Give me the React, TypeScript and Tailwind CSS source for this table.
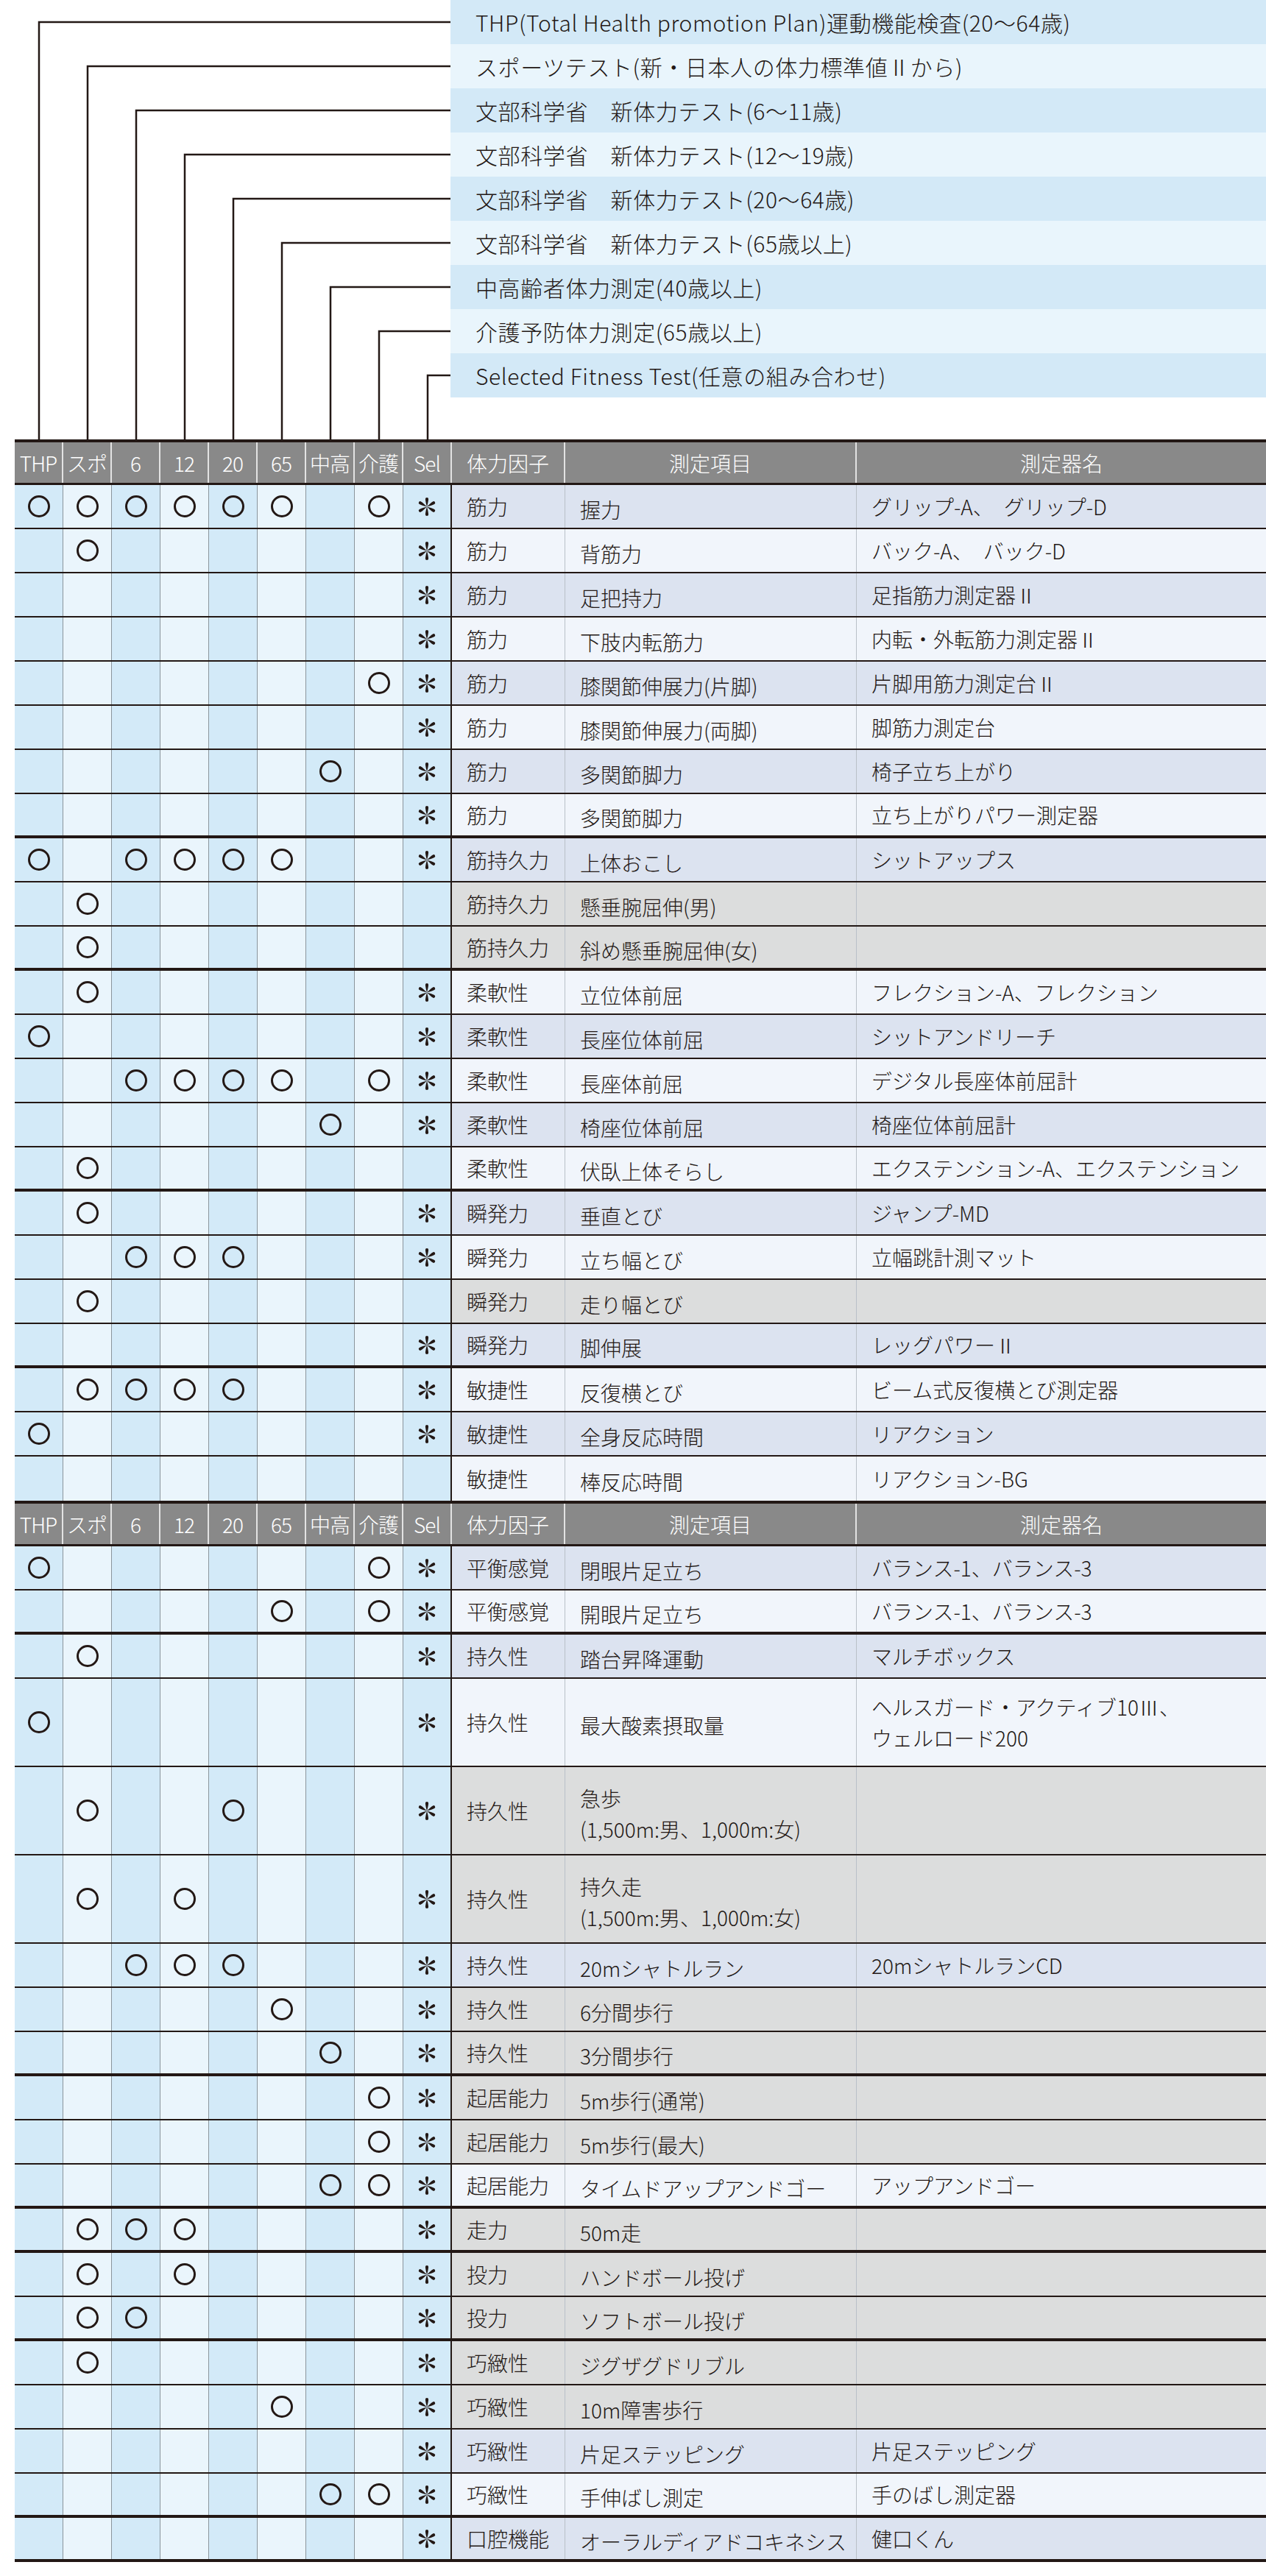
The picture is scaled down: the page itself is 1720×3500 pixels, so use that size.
import React from "react";

type Row = {
  m: string; // 9 marks: o = circle, * = asterisk, . = empty
  f: string;
  item: string;
  dev: string;
  bg: "d" | "l" | "g";
  end?: boolean;
  tall?: boolean;
  last?: boolean;
};

const legend = [
  "THP(Total Health promotion Plan)運動機能検査(20〜64歳)",
  "スポーツテスト(新・日本人の体力標準値Ⅱから)",
  "文部科学省　新体力テスト(6〜11歳)",
  "文部科学省　新体力テスト(12〜19歳)",
  "文部科学省　新体力テスト(20〜64歳)",
  "文部科学省　新体力テスト(65歳以上)",
  "中高齢者体力測定(40歳以上)",
  "介護予防体力測定(65歳以上)",
  "Selected Fitness Test(任意の組み合わせ)",
];

const heads = ["THP", "スポ", "6", "12", "20", "65", "中高", "介護", "Sel"];

const table1: Row[] = [
  { m: "oooooo.o*", f: "筋力", item: "握力", dev: "グリップ-A、　グリップ-D", bg: "d" },
  { m: ".o......*", f: "筋力", item: "背筋力", dev: "バック-A、　バック-D", bg: "l" },
  { m: "........*", f: "筋力", item: "足把持力", dev: "足指筋力測定器Ⅱ", bg: "d" },
  { m: "........*", f: "筋力", item: "下肢内転筋力", dev: "内転・外転筋力測定器Ⅱ", bg: "l" },
  { m: ".......o*", f: "筋力", item: "膝関節伸展力(片脚)", dev: "片脚用筋力測定台Ⅱ", bg: "d" },
  { m: "........*", f: "筋力", item: "膝関節伸展力(両脚)", dev: "脚筋力測定台", bg: "l" },
  { m: "......o.*", f: "筋力", item: "多関節脚力", dev: "椅子立ち上がり", bg: "d" },
  { m: "........*", f: "筋力", item: "多関節脚力", dev: "立ち上がりパワー測定器", bg: "l", end: true },
  { m: "o.oooo..*", f: "筋持久力", item: "上体おこし", dev: "シットアップス", bg: "d" },
  { m: ".o.......", f: "筋持久力", item: "懸垂腕屈伸(男)", dev: "", bg: "g" },
  { m: ".o.......", f: "筋持久力", item: "斜め懸垂腕屈伸(女)", dev: "", bg: "g", end: true },
  { m: ".o......*", f: "柔軟性", item: "立位体前屈", dev: "フレクション-A、フレクション", bg: "l" },
  { m: "o.......*", f: "柔軟性", item: "長座位体前屈", dev: "シットアンドリーチ", bg: "d" },
  { m: "..oooo.o*", f: "柔軟性", item: "長座体前屈", dev: "デジタル長座体前屈計", bg: "l" },
  { m: "......o.*", f: "柔軟性", item: "椅座位体前屈", dev: "椅座位体前屈計", bg: "d" },
  { m: ".o.......", f: "柔軟性", item: "伏臥上体そらし", dev: "エクステンション-A、エクステンション", bg: "l", end: true },
  { m: ".o......*", f: "瞬発力", item: "垂直とび", dev: "ジャンプ-MD", bg: "d" },
  { m: "..ooo...*", f: "瞬発力", item: "立ち幅とび", dev: "立幅跳計測マット", bg: "l" },
  { m: ".o.......", f: "瞬発力", item: "走り幅とび", dev: "", bg: "g" },
  { m: "........*", f: "瞬発力", item: "脚伸展", dev: "レッグパワーⅡ", bg: "d", end: true },
  { m: ".oooo...*", f: "敏捷性", item: "反復横とび", dev: "ビーム式反復横とび測定器", bg: "l" },
  { m: "o.......*", f: "敏捷性", item: "全身反応時間", dev: "リアクション", bg: "d" },
  { m: ".........", f: "敏捷性", item: "棒反応時間", dev: "リアクション-BG", bg: "l", last: true },
];

const table2: Row[] = [
  { m: "o......o*", f: "平衡感覚", item: "閉眼片足立ち", dev: "バランス-1、バランス-3", bg: "d" },
  { m: ".....o.o*", f: "平衡感覚", item: "開眼片足立ち", dev: "バランス-1、バランス-3", bg: "l", end: true },
  { m: ".o......*", f: "持久性", item: "踏台昇降運動", dev: "マルチボックス", bg: "d" },
  { m: "o.......*", f: "持久性", item: "最大酸素摂取量", dev: "ヘルスガード・アクティブ10Ⅲ、\nウェルロード200", bg: "l", tall: true },
  { m: ".o..o...*", f: "持久性", item: "急歩\n(1,500m:男、1,000m:女)", dev: "", bg: "g", tall: true },
  { m: ".o.o....*", f: "持久性", item: "持久走\n(1,500m:男、1,000m:女)", dev: "", bg: "g", tall: true },
  { m: "..ooo...*", f: "持久性", item: "20mシャトルラン", dev: "20mシャトルランCD", bg: "d" },
  { m: ".....o..*", f: "持久性", item: "6分間歩行", dev: "", bg: "g" },
  { m: "......o.*", f: "持久性", item: "3分間歩行", dev: "", bg: "g", end: true },
  { m: ".......o*", f: "起居能力", item: "5m歩行(通常)", dev: "", bg: "g" },
  { m: ".......o*", f: "起居能力", item: "5m歩行(最大)", dev: "", bg: "g" },
  { m: "......oo*", f: "起居能力", item: "タイムドアップアンドゴー", dev: "アップアンドゴー", bg: "l", end: true },
  { m: ".ooo....*", f: "走力", item: "50m走", dev: "", bg: "g", end: true },
  { m: ".o.o....*", f: "投力", item: "ハンドボール投げ", dev: "", bg: "g" },
  { m: ".oo.....*", f: "投力", item: "ソフトボール投げ", dev: "", bg: "g", end: true },
  { m: ".o......*", f: "巧緻性", item: "ジグザグドリブル", dev: "", bg: "g" },
  { m: ".....o..*", f: "巧緻性", item: "10m障害歩行", dev: "", bg: "g" },
  { m: "........*", f: "巧緻性", item: "片足ステッピング", dev: "片足ステッピング", bg: "d" },
  { m: "......oo*", f: "巧緻性", item: "手伸ばし測定", dev: "手のばし測定器", bg: "l", end: true },
  { m: "........*", f: "口腔機能", item: "オーラルディアドコキネシス", dev: "健口くん", bg: "d", end: true },
];

function Asterisk() {
  const petal = "M50 50 C47.5 40 43 24 43 15 A7 7 0 0 1 57 15 C57 24 52.5 40 50 50 Z";
  return (
    <svg width="30" height="31" viewBox="0 0 100 100" className="block">
      {[0, 60, 120, 180, 240, 300].map((r) => (
        <path key={r} d={petal} fill="#231815" transform={`rotate(${r} 50 50)`} />
      ))}
    </svg>
  );
}

function Circle() {
  return <div className="w-[30px] h-[30px] rounded-full border-[3.5px] border-[#231815]" />;
}

function Lines({ text }: { text: string }) {
  return (
    <div className="leading-[42px]">
      {text.split("\n").map((t, i) => (
        <div key={i}>{t}</div>
      ))}
    </div>
  );
}

function Header() {
  return (
    <div className="flex h-[62px] border-t-4 border-b-[3px] border-[#231815] bg-[#898989] text-white text-[28px]">
      {heads.map((h) => (
        <div key={h} className="w-[66px] shrink-0 flex items-center justify-center border-r-2 border-[#e2e2e2] whitespace-nowrap tracking-[-1px]">
          {h}
        </div>
      ))}
      <div className="w-[154px] shrink-0 flex items-center pl-[20px] border-r-2 border-[#e2e2e2]">体力因子</div>
      <div className="w-[396px] shrink-0 flex items-center justify-center border-r-2 border-[#e2e2e2]">測定項目</div>
      <div className="flex-1 flex items-center justify-center">測定器名</div>
    </div>
  );
}

function TableRow({ r }: { r: Row }) {
  const border = r.last ? "" : r.end ? "border-b-4 border-[#231815]" : "border-b-2 border-[#231815]";
  const bg = r.bg === "d" ? "bg-[#dce3f0]" : r.bg === "l" ? "bg-[#f1f5fb]" : "bg-[#dcdddd]";
  return (
    <div className={`flex ${r.tall ? "h-[120px]" : "h-[60px]"} ${border}`}>
      {r.m.split("").map((c, i) => (
        <div
          key={i}
          className={`w-[66px] shrink-0 flex items-center justify-center ${i % 2 === 0 ? "bg-[#d3eaf8]" : "bg-[#eaf5fc]"} ${i === 8 ? "border-r-2 border-[#231815]" : "border-r border-[#8b959c]"}`}
        >
          {c === "o" && <Circle />}
          {c === "*" && <Asterisk />}
        </div>
      ))}
      <div className={`w-[154px] shrink-0 flex items-center pl-[20px] border-r border-[#b9c0c8] whitespace-nowrap ${bg}`}>{r.f}</div>
      <div className={`w-[396px] shrink-0 flex items-center pl-[20px] pt-[8px] border-r border-[#b9c0c8] whitespace-nowrap ${bg}`}>
        <Lines text={r.item} />
      </div>
      <div className={`flex-1 flex items-center pl-[20px] whitespace-nowrap ${bg}`}>
        <Lines text={r.dev} />
      </div>
    </div>
  );
}

export default function App() {
  return (
    <div className="w-[1720px] h-[3500px] bg-white text-[#231815] font-light font-['Noto_Sans_CJK_JP',sans-serif]">
      {/* Legend with connector lines */}
      <div className="flex h-[597px]">
        <svg width="612" height="597" className="shrink-0 block">
          {legend.map((_, i) => {
            const x = 53 + 66 * i;
            const y = 30 + 60 * i;
            return <path key={i} d={`M${x} 597 V${y} H612`} fill="none" stroke="#231815" strokeWidth="2.5" />;
          })}
        </svg>
        <div className="flex-1">
          {legend.map((t, i) => (
            <div
              key={t}
              className={`h-[60px] flex items-center pl-[34px] text-[30px] tracking-[0.6px] whitespace-nowrap ${i % 2 === 0 ? "bg-[#d3e9f7]" : "bg-[#e9f5fc]"}`}
            >
              {t}
            </div>
          ))}
        </div>
      </div>

      {/* Table */}
      <div className="ml-[20px] text-[28px]">
        <Header />
        {table1.map((r, i) => (
          <TableRow key={`a${i}`} r={r} />
        ))}
        <Header />
        {table2.map((r, i) => (
          <TableRow key={`b${i}`} r={r} />
        ))}
      </div>
    </div>
  );
}
